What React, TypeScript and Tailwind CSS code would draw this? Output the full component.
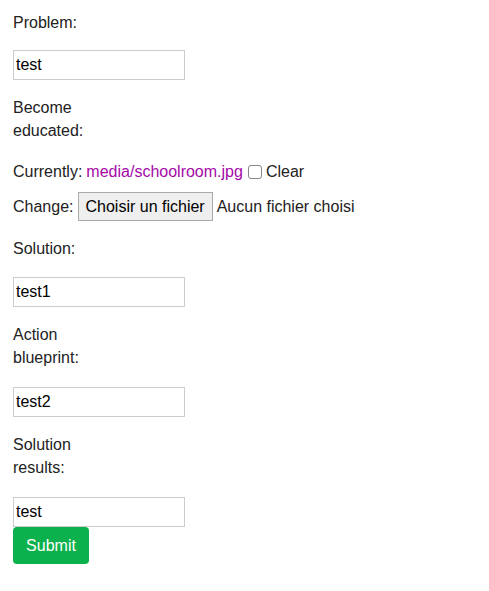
import React from 'react';

const font = { fontFamily: '"Liberation Sans", Arial, Helvetica, sans-serif' };

const Label: React.FC<{ text: string; className?: string }> = ({ text, className = '' }) => (
  <label className={`-mb-[1px] block w-[90px] pt-[1px] text-[16px] leading-[23px] text-[#222] ${className}`}>{text}</label>
);

const TextInput: React.FC<{ value: string; className?: string }> = ({ value, className = '' }) => (
  <input
    type="text"
    defaultValue={value}
    className={`block h-[30px] w-[172px] border border-[#ccc] bg-white px-[2px] text-[16px] text-black outline-none ${className}`}
    style={font}
  />
);

export default function App() {
  return (
    <div className="min-h-[591px] w-[489px] bg-white px-[13px] pt-[10px]" style={font}>
      <form onSubmit={e => e.preventDefault()}>
        <Label text="Problem:" />
        <TextInput value="test" className="mt-[17px]" />

        <Label text="Become educated:" className="mt-[15px]" />

        <div className="-mb-[1px] mt-[18px] flex items-center pt-[1px] text-[16px] leading-[23px] text-[#222]">
          <span>Currently:</span>
          <a href="#" className="ml-[4px] text-[#a40aa8]">media/schoolroom.jpg</a>
          <span className="ml-[5px] inline-block h-[14px] w-[14px] rounded-[3px] border border-[#888] bg-white"></span>
          <span className="ml-[4px]">Clear</span>
        </div>

        <div className="mt-[10px] flex items-center text-[16px] text-[#222]">
          <span>Change:</span>
          <button
            type="button"
            className="ml-[4px] h-[29px] border border-[#aaa] bg-[#efefef] px-[7px] text-[16px] text-black"
            style={font}
          >
            Choisir un fichier
          </button>
          <span className="ml-[4px]">Aucun fichier choisi</span>
        </div>

        <Label text="Solution:" className="mt-[15px]" />
        <TextInput value="test1" className="mt-[18px]" />

        <Label text="Action blueprint:" className="mt-[15px]" />
        <TextInput value="test2" className="mt-[19px]" />

        <Label text="Solution results:" className="mt-[15px]" />
        <TextInput value="test" className="mt-[19px]" />

        <button
          type="submit"
          className="block h-[37px] w-[76px] rounded-[4px] bg-[#0bb14c] text-[16px] text-white"
          style={font}
        >
          Submit
        </button>
      </form>
    </div>
  );
}
